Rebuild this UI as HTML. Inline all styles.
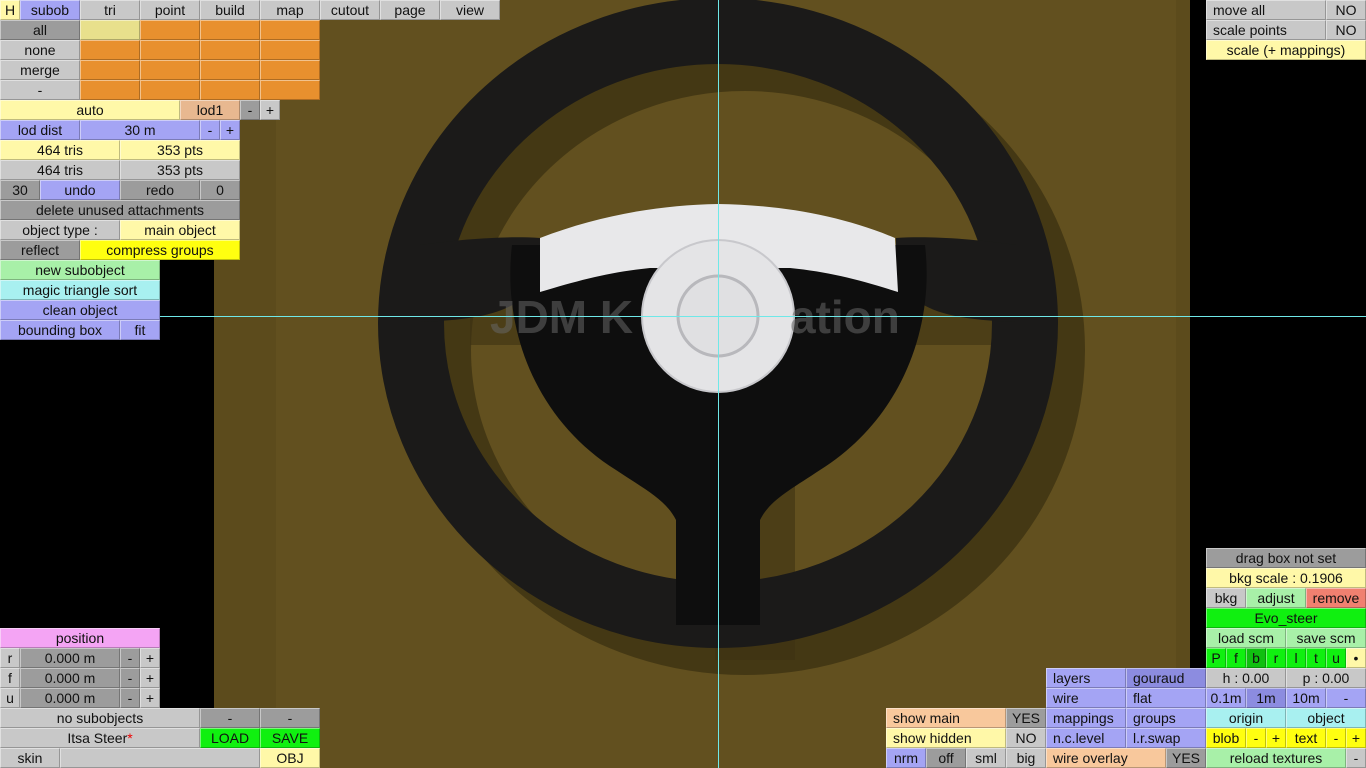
<!DOCTYPE html>
<html><head><meta charset="utf-8"><style>
html,body{margin:0;padding:0;background:#000;width:1366px;height:768px;overflow:hidden;position:relative;font-family:"Liberation Sans",sans-serif}
.b{position:absolute;height:20px;box-sizing:border-box;border-top:1px solid rgba(255,255,255,.45);border-left:1px solid rgba(255,255,255,.45);border-bottom:1px solid rgba(0,0,0,.25);border-right:1px solid rgba(0,0,0,.25);font-size:14px;line-height:18px;text-align:center;color:#111;white-space:nowrap;overflow:hidden}
.l{text-align:left;padding-left:6px}
.g{background:#c8c8c8}.d{background:#9c9c9c}.bl{background:#a4a4f4}.db{background:#8c8ce0}.y{background:#fff8a8}.o{background:#e8902e}
.gr{background:#a8f0a8}.c{background:#a8f0f0}.yy{background:#ffff10}.p{background:#f4a4f4}.pe{background:#f8c89c}.G{background:#10f010}.r{background:#f08070}
</style></head><body>
<svg style="position:absolute;left:0;top:0" width="1366" height="768">
<rect x="214" y="0" width="976" height="768" fill="#5c4b1c"/>
<rect x="276" y="0" width="900" height="768" fill="#62501f"/>
<g fill="none" stroke="#3d3212" opacity=".8">
<ellipse cx="745" cy="350" rx="307" ry="292" stroke-width="66"/>
</g>
<path d="M470,270 L1010,270 L1010,345 L470,345 Z" fill="#3d3212" opacity=".6"/>
<rect x="715" y="470" width="80" height="190" fill="#3d3212" opacity=".6"/>
<ellipse cx="718" cy="323" rx="307" ry="292" fill="none" stroke="#1b1a19" stroke-width="66"/>
<path d="M420,245 C470,238 510,236 540,238 L540,292 L520,300 C500,315 470,320 420,322 Z" fill="#1b1a19"/>
<path d="M1016,245 C966,238 926,236 896,238 L896,292 L916,300 C936,315 966,320 1016,322 Z" fill="#1b1a19"/>
<path d="M512,245 L925,245 C935,330 900,420 820,470 C790,490 770,500 760,520 L760,625 L676,625 L676,520 C666,500 646,490 616,470 C536,420 502,330 512,245 Z" fill="#0e0e0e"/>
<path d="M540,238 C600,215 660,205 718,204 C780,205 840,215 895,238 L898,292 C860,280 830,272 790,268 L650,268 C610,272 580,280 540,292 Z" fill="#e8e8ea"/>
<ellipse cx="718" cy="316" rx="76" ry="76" fill="#e4e4e6" stroke="#c8c8cc" stroke-width="2"/>
<ellipse cx="718" cy="316" rx="40" ry="40" fill="#e0e0e2" stroke="#b8b8bc" stroke-width="3"/>
<text x="490" y="333" font-family="Liberation Sans" font-weight="bold" font-size="46" fill="#666" opacity=".55">JDM K</text>
<text x="790" y="333" font-family="Liberation Sans" font-weight="bold" font-size="46" fill="#666" opacity=".55">ation</text>
<rect x="1190" y="0" width="176" height="768" fill="#000"/>
<line x1="718.5" y1="0" x2="718.5" y2="768" stroke="#6fe8e8" stroke-width="1"/>
<line x1="0" y1="316.5" x2="1366" y2="316.5" stroke="#6fe8e8" stroke-width="1"/>
</svg>

<div class="b y" style="left:0;top:0;width:20px">H</div>
<div class="b bl" style="left:20px;top:0;width:60px">subob</div>
<div class="b g" style="left:80px;top:0;width:60px">tri</div>
<div class="b g" style="left:140px;top:0;width:60px">point</div>
<div class="b g" style="left:200px;top:0;width:60px">build</div>
<div class="b g" style="left:260px;top:0;width:60px">map</div>
<div class="b g" style="left:320px;top:0;width:60px">cutout</div>
<div class="b g" style="left:380px;top:0;width:60px">page</div>
<div class="b g" style="left:440px;top:0;width:60px">view</div>

<div class="b d" style="left:0;top:20px;width:80px">all</div>
<div class="b" style="left:80px;top:20px;width:60px;background:#e8e08c"></div>
<div class="b o" style="left:140px;top:20px;width:60px"></div><div class="b o" style="left:200px;top:20px;width:60px"></div><div class="b o" style="left:260px;top:20px;width:60px"></div>
<div class="b g" style="left:0;top:40px;width:80px">none</div>
<div class="b o" style="left:80px;top:40px;width:60px"></div><div class="b o" style="left:140px;top:40px;width:60px"></div><div class="b o" style="left:200px;top:40px;width:60px"></div><div class="b o" style="left:260px;top:40px;width:60px"></div>
<div class="b g" style="left:0;top:60px;width:80px">merge</div>
<div class="b o" style="left:80px;top:60px;width:60px"></div><div class="b o" style="left:140px;top:60px;width:60px"></div><div class="b o" style="left:200px;top:60px;width:60px"></div><div class="b o" style="left:260px;top:60px;width:60px"></div>
<div class="b g" style="left:0;top:80px;width:80px">-</div>
<div class="b o" style="left:80px;top:80px;width:60px"></div><div class="b o" style="left:140px;top:80px;width:60px"></div><div class="b o" style="left:200px;top:80px;width:60px"></div><div class="b o" style="left:260px;top:80px;width:60px"></div>

<div class="b y" style="left:0;top:100px;width:180px">auto</div>
<div class="b" style="left:180px;top:100px;width:60px;background:#e8b890">lod1</div>
<div class="b d" style="left:240px;top:100px;width:20px">-</div>
<div class="b g" style="left:260px;top:100px;width:20px">+</div>
<div class="b bl" style="left:0;top:120px;width:80px">lod dist</div>
<div class="b bl" style="left:80px;top:120px;width:120px">30 m</div>
<div class="b bl" style="left:200px;top:120px;width:20px">-</div>
<div class="b bl" style="left:220px;top:120px;width:20px">+</div>
<div class="b y" style="left:0;top:140px;width:120px">464 tris</div>
<div class="b y" style="left:120px;top:140px;width:120px">353 pts</div>
<div class="b g" style="left:0;top:160px;width:120px">464 tris</div>
<div class="b g" style="left:120px;top:160px;width:120px">353 pts</div>
<div class="b d" style="left:0;top:180px;width:40px">30</div>
<div class="b bl" style="left:40px;top:180px;width:80px">undo</div>
<div class="b d" style="left:120px;top:180px;width:80px">redo</div>
<div class="b d" style="left:200px;top:180px;width:40px">0</div>
<div class="b d" style="left:0;top:200px;width:240px">delete unused attachments</div>
<div class="b g" style="left:0;top:220px;width:120px">object type :</div>
<div class="b y" style="left:120px;top:220px;width:120px">main object</div>
<div class="b d" style="left:0;top:240px;width:80px">reflect</div>
<div class="b yy" style="left:80px;top:240px;width:160px">compress groups</div>
<div class="b gr" style="left:0;top:260px;width:160px">new subobject</div>
<div class="b c" style="left:0;top:280px;width:160px">magic triangle sort</div>
<div class="b bl" style="left:0;top:300px;width:160px">clean object</div>
<div class="b bl" style="left:0;top:320px;width:120px">bounding box</div>
<div class="b bl" style="left:120px;top:320px;width:40px">fit</div>

<div class="b p" style="left:0;top:628px;width:160px">position</div>
<div class="b g" style="left:0;top:648px;width:20px">r</div><div class="b d" style="left:20px;top:648px;width:100px">0.000 m</div><div class="b d" style="left:120px;top:648px;width:20px">-</div><div class="b g" style="left:140px;top:648px;width:20px">+</div>
<div class="b g" style="left:0;top:668px;width:20px">f</div><div class="b d" style="left:20px;top:668px;width:100px">0.000 m</div><div class="b d" style="left:120px;top:668px;width:20px">-</div><div class="b g" style="left:140px;top:668px;width:20px">+</div>
<div class="b g" style="left:0;top:688px;width:20px">u</div><div class="b d" style="left:20px;top:688px;width:100px">0.000 m</div><div class="b d" style="left:120px;top:688px;width:20px">-</div><div class="b g" style="left:140px;top:688px;width:20px">+</div>
<div class="b g" style="left:0;top:708px;width:200px">no subobjects</div>
<div class="b d" style="left:200px;top:708px;width:60px">-</div><div class="b d" style="left:260px;top:708px;width:60px">-</div>
<div class="b g" style="left:0;top:728px;width:200px">Itsa Steer<span style="color:#e00">*</span></div>
<div class="b G" style="left:200px;top:728px;width:60px">LOAD</div><div class="b G" style="left:260px;top:728px;width:60px">SAVE</div>
<div class="b g" style="left:0;top:748px;width:60px">skin</div>
<div class="b g" style="left:60px;top:748px;width:200px"></div>
<div class="b y" style="left:260px;top:748px;width:60px">OBJ</div>

<div class="b g l" style="left:1206px;top:0;width:120px">move all</div><div class="b g" style="left:1326px;top:0;width:40px">NO</div>
<div class="b g l" style="left:1206px;top:20px;width:120px">scale points</div><div class="b g" style="left:1326px;top:20px;width:40px">NO</div>
<div class="b y" style="left:1206px;top:40px;width:160px">scale (+ mappings)</div>

<div class="b d" style="left:1206px;top:548px;width:160px">drag box not set</div>
<div class="b y" style="left:1206px;top:568px;width:160px">bkg scale : 0.1906</div>
<div class="b g" style="left:1206px;top:588px;width:40px">bkg</div>
<div class="b gr" style="left:1246px;top:588px;width:60px">adjust</div>
<div class="b r" style="left:1306px;top:588px;width:60px">remove</div>
<div class="b G" style="left:1206px;top:608px;width:160px">Evo_steer</div>
<div class="b gr" style="left:1206px;top:628px;width:80px">load scm</div>
<div class="b gr" style="left:1286px;top:628px;width:80px">save scm</div>
<div class="b G" style="left:1206px;top:648px;width:20px">P</div><div class="b G" style="left:1226px;top:648px;width:20px">f</div><div class="b" style="left:1246px;top:648px;width:20px;background:#10c010">b</div><div class="b G" style="left:1266px;top:648px;width:20px">r</div><div class="b G" style="left:1286px;top:648px;width:20px">l</div><div class="b G" style="left:1306px;top:648px;width:20px">t</div><div class="b G" style="left:1326px;top:648px;width:20px">u</div><div class="b y" style="left:1346px;top:648px;width:20px">•</div>
<div class="b g" style="left:1206px;top:668px;width:80px">h : 0.00</div><div class="b g" style="left:1286px;top:668px;width:80px">p : 0.00</div>
<div class="b bl" style="left:1206px;top:688px;width:40px">0.1m</div><div class="b db" style="left:1246px;top:688px;width:40px">1m</div><div class="b bl" style="left:1286px;top:688px;width:40px">10m</div><div class="b bl" style="left:1326px;top:688px;width:40px">-</div>
<div class="b c" style="left:1206px;top:708px;width:80px">origin</div><div class="b c" style="left:1286px;top:708px;width:80px">object</div>
<div class="b yy" style="left:1206px;top:728px;width:40px">blob</div><div class="b yy" style="left:1246px;top:728px;width:20px">-</div><div class="b yy" style="left:1266px;top:728px;width:20px">+</div><div class="b yy" style="left:1286px;top:728px;width:40px">text</div><div class="b yy" style="left:1326px;top:728px;width:20px">-</div><div class="b yy" style="left:1346px;top:728px;width:20px">+</div>
<div class="b gr" style="left:1206px;top:748px;width:140px">reload textures</div><div class="b g" style="left:1346px;top:748px;width:20px">-</div>

<div class="b bl l" style="left:1046px;top:668px;width:80px">layers</div><div class="b db l" style="left:1126px;top:668px;width:80px">gouraud</div>
<div class="b bl l" style="left:1046px;top:688px;width:80px">wire</div><div class="b bl l" style="left:1126px;top:688px;width:80px">flat</div>
<div class="b bl l" style="left:1046px;top:708px;width:80px">mappings</div><div class="b bl l" style="left:1126px;top:708px;width:80px">groups</div>
<div class="b bl l" style="left:1046px;top:728px;width:80px">n.c.level</div><div class="b bl l" style="left:1126px;top:728px;width:80px">l.r.swap</div>
<div class="b pe l" style="left:1046px;top:748px;width:120px">wire overlay</div><div class="b d" style="left:1166px;top:748px;width:40px">YES</div>
<div class="b pe l" style="left:886px;top:708px;width:120px">show main</div><div class="b d" style="left:1006px;top:708px;width:40px">YES</div>
<div class="b y l" style="left:886px;top:728px;width:120px">show hidden</div><div class="b g" style="left:1006px;top:728px;width:40px">NO</div>
<div class="b bl" style="left:886px;top:748px;width:40px">nrm</div><div class="b d" style="left:926px;top:748px;width:40px">off</div><div class="b g" style="left:966px;top:748px;width:40px">sml</div><div class="b g" style="left:1006px;top:748px;width:40px">big</div>
</body></html>
